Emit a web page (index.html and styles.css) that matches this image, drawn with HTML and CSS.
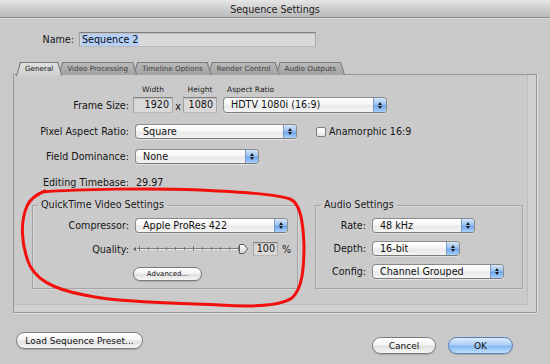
FILE: index.html
```html
<!DOCTYPE html>
<html>
<head>
<meta charset="utf-8">
<title>Sequence Settings</title>
<link rel="stylesheet" href="styles.css">
</head>
<body>
<div class="window">
  <div class="titlebar">Sequence Settings</div>

  <div class="name-row">
    <span class="name-label">Name:</span>
    <div class="field name-field"><span class="selection">Sequence 2</span></div>
  </div>

  <div class="tabs">
    <div class="tab active t1">General</div>
    <div class="tab t2">Video Processing</div>
    <div class="tab t3">Timeline Options</div>
    <div class="tab t4">Render Control</div>
    <div class="tab t5">Audio Outputs</div>
  </div>

  <div class="panel">
    <div class="panel-inner">
      <div class="head-row">
        <span class="head-w">Width</span>
        <span class="head-h">Height</span>
        <span class="head-a">Aspect Ratio</span>
      </div>

      <div class="row frame-row">
        <span class="lbl">Frame Size:</span>
        <div class="field num n1920">1920</div>
        <span class="times">x</span>
        <div class="field num n1080">1080</div>
        <div class="popup p-hdtv"><span class="ptext">HDTV 1080i (16:9)</span><span class="stepper"></span></div>
      </div>

      <div class="row pixel-row">
        <span class="lbl">Pixel Aspect Ratio:</span>
        <div class="popup p-square"><span class="ptext">Square</span><span class="stepper"></span></div>
        <span class="checkbox"></span>
        <span class="check-label">Anamorphic 16:9</span>
      </div>

      <div class="row field-row">
        <span class="lbl">Field Dominance:</span>
        <div class="popup p-none"><span class="ptext">None</span><span class="stepper"></span></div>
      </div>

      <div class="row tb-row">
        <span class="lbl">Editing Timebase:</span>
        <span class="tb-value">29.97</span>
      </div>

      <div class="groups">
        <fieldset class="group qt">
          <legend>QuickTime Video Settings</legend>
          <div class="grow g-comp">
            <span class="glbl qlbl">Compressor:</span>
            <div class="popup p-comp"><span class="ptext">Apple ProRes 422</span><span class="stepper"></span></div>
          </div>
          <div class="grow g-qual">
            <span class="glbl qlbl">Quality:</span>
            <svg class="slider" width="116" height="14" viewBox="0 0 116 14">
              <polygon points="1,7 4,5 4,9" fill="#666"/>
              <line x1="5" y1="6.5" x2="111" y2="6.5" stroke="#7a7a7a" stroke-width="1"/>
              <line x1="5" y1="7.5" x2="111" y2="7.5" stroke="#eeeeee" stroke-width="1"/>
              <g stroke="#777" stroke-width="1">
                <line x1="7.5" y1="4" x2="7.5" y2="9"/>
                <line x1="16.5" y1="5" x2="16.5" y2="8"/>
                <line x1="25.5" y1="5" x2="25.5" y2="8"/>
                <line x1="34.5" y1="5" x2="34.5" y2="8"/>
                <line x1="43.5" y1="5" x2="43.5" y2="8"/>
                <line x1="52.5" y1="5" x2="52.5" y2="8"/>
                <line x1="61.5" y1="4" x2="61.5" y2="9"/>
                <line x1="70.5" y1="5" x2="70.5" y2="8"/>
                <line x1="79.5" y1="5" x2="79.5" y2="8"/>
                <line x1="88.5" y1="5" x2="88.5" y2="8"/>
                <line x1="97.5" y1="5" x2="97.5" y2="8"/>
                <line x1="106.5" y1="4" x2="106.5" y2="9"/>
              </g>
              <defs>
                <linearGradient id="thumbg" x1="0" y1="0" x2="0" y2="1">
                  <stop offset="0" stop-color="#ffffff"/>
                  <stop offset="1" stop-color="#d4d4d4"/>
                </linearGradient>
              </defs>
              <path d="M107.5,2.5 H112 L115.5,7 L112,11.5 H107.5 Z" fill="url(#thumbg)" stroke="#5f5f5f" stroke-width="1"/>
            </svg>
            <div class="field qval">100</div>
            <span class="pct">%</span>
          </div>
          <div class="grow g-adv">
            <div class="btn btn-adv">Advanced...</div>
          </div>
        </fieldset>

        <fieldset class="group audio">
          <legend>Audio Settings</legend>
          <div class="grow a-rate">
            <span class="glbl albl">Rate:</span>
            <div class="popup p-rate"><span class="ptext">48 kHz</span><span class="stepper"></span></div>
          </div>
          <div class="grow a-depth">
            <span class="glbl albl">Depth:</span>
            <div class="popup p-depth"><span class="ptext">16-bit</span><span class="stepper"></span></div>
          </div>
          <div class="grow a-config">
            <span class="glbl albl">Config:</span>
            <div class="popup p-config"><span class="ptext">Channel Grouped</span><span class="stepper"></span></div>
          </div>
        </fieldset>
      </div>
    </div>
  </div>

  <div class="footer">
    <div class="btn btn-load">Load Sequence Preset...</div>
    <div class="footer-spacer"></div>
    <div class="btn btn-cancel">Cancel</div>
    <div class="btn btn-ok">OK</div>
  </div>

  <svg class="annotation" width="550" height="364" viewBox="0 0 550 364">
    <path d="M42,192 C80,189 150,188 200,190 C240,192 275,194 290,199 C300,203 303,220 304,245 C304,270 302,289 292,298 C280,306 250,307 220,305 C170,303 120,302 95,297 C65,292 40,285 30,266 C21,246 20,222 27,206 C30,199 35,195 45,191" fill="none" stroke="#f2100c" stroke-width="3" stroke-linecap="round" stroke-linejoin="round"/>
  </svg>
</div>
</body>
</html>
```

FILE: styles.css
```css
html, body {
  margin: 0;
  padding: 0;
  background: #c9c9c9;
}

body {
  font-family: "DejaVu Sans", "Liberation Sans", sans-serif;
  font-size: 9.6px;
  color: #161616;
}

.window {
  position: relative;
  width: 550px;
  height: 364px;
  overflow: hidden;
  background: #c9c9c9;
}

/* Title bar */
.titlebar {
  height: 15px;
  padding-top: 2px;
  line-height: 15px;
  text-align: center;
  font-size: 9.6px;
  color: #1e1e1e;
  background: linear-gradient(#e6e6e6, #cfcfcf 50%, #b9b9b9);
  border-bottom: 1px solid #8c8c8c;
  box-shadow: 0 1px 0 #d9d9d9;
}

/* Name row */
.name-row {
  display: flex;
  align-items: center;
  margin-top: 14px;
  height: 15px;
}

.name-label {
  width: 74px;
  text-align: right;
  flex: none;
}

.field {
  box-sizing: border-box;
  background: #d9d9d9;
  border: 1px solid;
  border-color: #7f7f7f #aaaaaa #b9b9b9 #a2a2a2;
  box-shadow: inset 0 1px 1px rgba(0, 0, 0, 0.12);
}

.name-field {
  margin-left: 5px;
  width: 237px;
  height: 15px;
  display: flex;
  align-items: center;
  padding-left: 1px;
}

.selection {
  background: #b6d1f4;
  line-height: 12px;
  padding: 0 1px;
  color: #0a0a1a;
}

/* Tabs */
.tabs {
  display: flex;
  margin-top: 15px;
  margin-left: 16px;
  height: 13px;
  position: relative;
  z-index: 2;
}

.tab {
  position: relative;
  height: 13px;
  padding: 0 9px;
  margin-right: -4px;
  font-size: 7.2px;
  line-height: 13px;
  color: #3c3c3c;
  white-space: nowrap;
}

.tab::before,
.tab::after {
  content: "";
  position: absolute;
  z-index: -1;
  clip-path: polygon(0 100%, 4px 0, calc(100% - 4px) 0, 100% 100%);
}

.tab::before {
  inset: 0;
  background: #7c7c7c;
}

.tab::after {
  inset: 1px 1px 0 1px;
  background: linear-gradient(#b9b9b9, #a2a2a2);
}

.t1 { z-index: 6; }
.t2 { z-index: 5; }
.t3 { z-index: 4; }
.t4 { z-index: 3; }
.t5 { z-index: 2; }

.tab.active {
  color: #111;
}

.tab.active::before {
  bottom: -1px;
}

.tab.active::after {
  bottom: -1px;
  background: linear-gradient(#dedede, #d0d0d0);
}

/* Panel */
.panel {
  box-sizing: border-box;
  margin: -1px 13px 0 13px;
  height: 239px;
  border: 1px solid #979797;
  box-shadow: 1px 1px 0 #e2e2e2;
  background: #d1d1d1;
  display: flex;
  position: relative;
  z-index: 1;
}

.panel-inner {
  flex: 1;
  margin: 0 8px 7px 0;
  padding-top: 10px;
  background: #cacaca;
  border-right: 1px solid #bdbdbd;
  border-bottom: 1px solid #bdbdbd;
}

.head-row {
  display: flex;
  height: 10px;
  line-height: 10px;
  font-size: 7.5px;
  color: #222;
}

.head-w {
  margin-left: 119px;
  width: 40px;
  text-align: center;
}

.head-h {
  margin-left: 10px;
  width: 34px;
  text-align: center;
}

.head-a {
  margin-left: 10px;
}

.row {
  display: flex;
  align-items: center;
}

.lbl {
  width: 115px;
  flex: none;
  text-align: right;
}

.frame-row {
  margin-top: 2px;
  height: 16px;
}

.num {
  height: 16px;
  line-height: 14px;
  text-align: right;
  padding-right: 3px;
  color: #111;
}

.n1920 {
  margin-left: 4px;
  width: 40px;
}

.times {
  width: 10px;
  text-align: center;
  padding-top: 3px;
}

.n1080 {
  width: 34px;
}

/* Popups */
.popup {
  box-sizing: border-box;
  display: flex;
  height: 15px;
  border: 1px solid #8b8b8b;
  border-bottom-color: #7a7a7a;
  border-radius: 4px;
  background: linear-gradient(#ffffff, #f6f6f6 45%, #e9e9e9 55%, #f4f4f4);
  box-shadow: 0 1px 0 rgba(255, 255, 255, 0.45);
  overflow: hidden;
  flex: none;
}

.ptext {
  flex: 1;
  padding-left: 7px;
  line-height: 13px;
  white-space: nowrap;
  color: #111;
}

.stepper {
  width: 12px;
  flex: none;
  border-left: 1px solid #7b98c4;
  background: linear-gradient(#d5e6fa, #9cc3f2 45%, #6fa6ea 55%, #a9d0fb);
  display: flex;
  flex-direction: column;
  align-items: center;
  justify-content: center;
  gap: 1px;
}

.stepper::before,
.stepper::after {
  content: "";
  width: 0;
  height: 0;
  border-left: 2px solid transparent;
  border-right: 2px solid transparent;
}

.stepper::before {
  border-bottom: 3px solid #1a1a1a;
}

.stepper::after {
  border-top: 3px solid #1a1a1a;
}

.p-hdtv {
  margin-left: 6px;
  width: 164px;
  height: 16px;
}

.p-hdtv .ptext {
  line-height: 14px;
}

.pixel-row {
  margin-top: 11px;
  height: 15px;
}

.p-square {
  margin-left: 6px;
  width: 162px;
}

.checkbox {
  box-sizing: border-box;
  width: 10px;
  height: 10px;
  margin-left: 19px;
  border: 1px solid #7e7e7e;
  border-radius: 2px;
  background: linear-gradient(#ffffff, #e6e6e6);
}

.check-label {
  margin-left: 3px;
}

.field-row {
  margin-top: 10px;
  height: 15px;
}

.p-none {
  margin-left: 6px;
  width: 124px;
}

.tb-row {
  margin-top: 11px;
  height: 14px;
}

.tb-value {
  margin-left: 7px;
}

/* Groups */
.groups {
  display: flex;
  align-items: stretch;
  margin-top: 11px;
}

.group {
  margin: 0;
  padding: 8px 0 7px 0;
  border: 1px solid #a4a4a4;
  box-shadow: inset 1px 1px 0 #d6d6d6, 1px 1px 0 #d6d6d6;
  min-width: 0;
  box-sizing: border-box;
}

.group legend {
  margin-left: 5px;
  padding: 0 3px;
  line-height: 10px;
  font-size: 9.6px;
  color: #1a1a1a;
}

.qt {
  margin-left: 18px;
  width: 266px;
}

.audio {
  margin-left: 17px;
  width: 208px;
}

.grow {
  display: flex;
  align-items: center;
}

.glbl {
  flex: none;
  text-align: right;
}

.qlbl {
  width: 96px;
}

.albl {
  width: 50px;
}

.g-comp {
  height: 15px;
}

.p-comp {
  margin-left: 6px;
  width: 153px;
}

.g-qual {
  margin-top: 9px;
  height: 14px;
}

.slider {
  display: block;
  margin-left: 3px;
  flex: none;
}

.qval {
  margin-left: 5px;
  width: 25px;
  height: 14px;
  line-height: 12px;
  text-align: right;
  padding-right: 2px;
}

.pct {
  margin-left: 4px;
}

.g-adv {
  margin-top: 11px;
  height: 14px;
}

.a-rate {
  height: 15px;
}

.a-depth,
.a-config {
  margin-top: 8px;
  height: 15px;
}

.p-rate,
.p-depth,
.p-config {
  margin-left: 6px;
}

.p-rate { width: 103px; }
.p-depth { width: 88px; }
.p-config { width: 132px; }

/* Buttons */
.btn {
  box-sizing: border-box;
  display: flex;
  align-items: center;
  justify-content: center;
  border: 1px solid #7b7b7b;
  border-radius: 9px;
  background: linear-gradient(#ffffff, #f4f4f4 45%, #e0e0e0 55%, #f6f6f6);
  box-shadow: 0 1px 1px rgba(0, 0, 0, 0.15);
  color: #111;
  font-size: 9px;
  white-space: nowrap;
  flex: none;
}

.btn-adv {
  margin-left: 100px;
  width: 69px;
  height: 14px;
  border-radius: 7px;
  font-size: 7px;
}

.footer {
  display: flex;
  align-items: flex-start;
  margin-top: 19px;
  padding: 0 37px 0 16px;
}

.footer-spacer {
  flex: 1;
}

.btn-load {
  width: 127px;
  height: 17px;
}

.btn-cancel {
  margin-top: 5px;
  width: 64px;
  height: 17px;
}

.btn-ok {
  margin-top: 5px;
  margin-left: 12px;
  width: 65px;
  height: 17px;
  border-color: #5a7eaf;
  background: linear-gradient(#dcedfd, #add0f7 45%, #86b8f0 55%, #bfe0fd);
}

/* Hand-drawn annotation overlay */
.annotation {
  position: absolute;
  left: 0;
  top: 0;
  pointer-events: none;
  z-index: 10;
}
```
